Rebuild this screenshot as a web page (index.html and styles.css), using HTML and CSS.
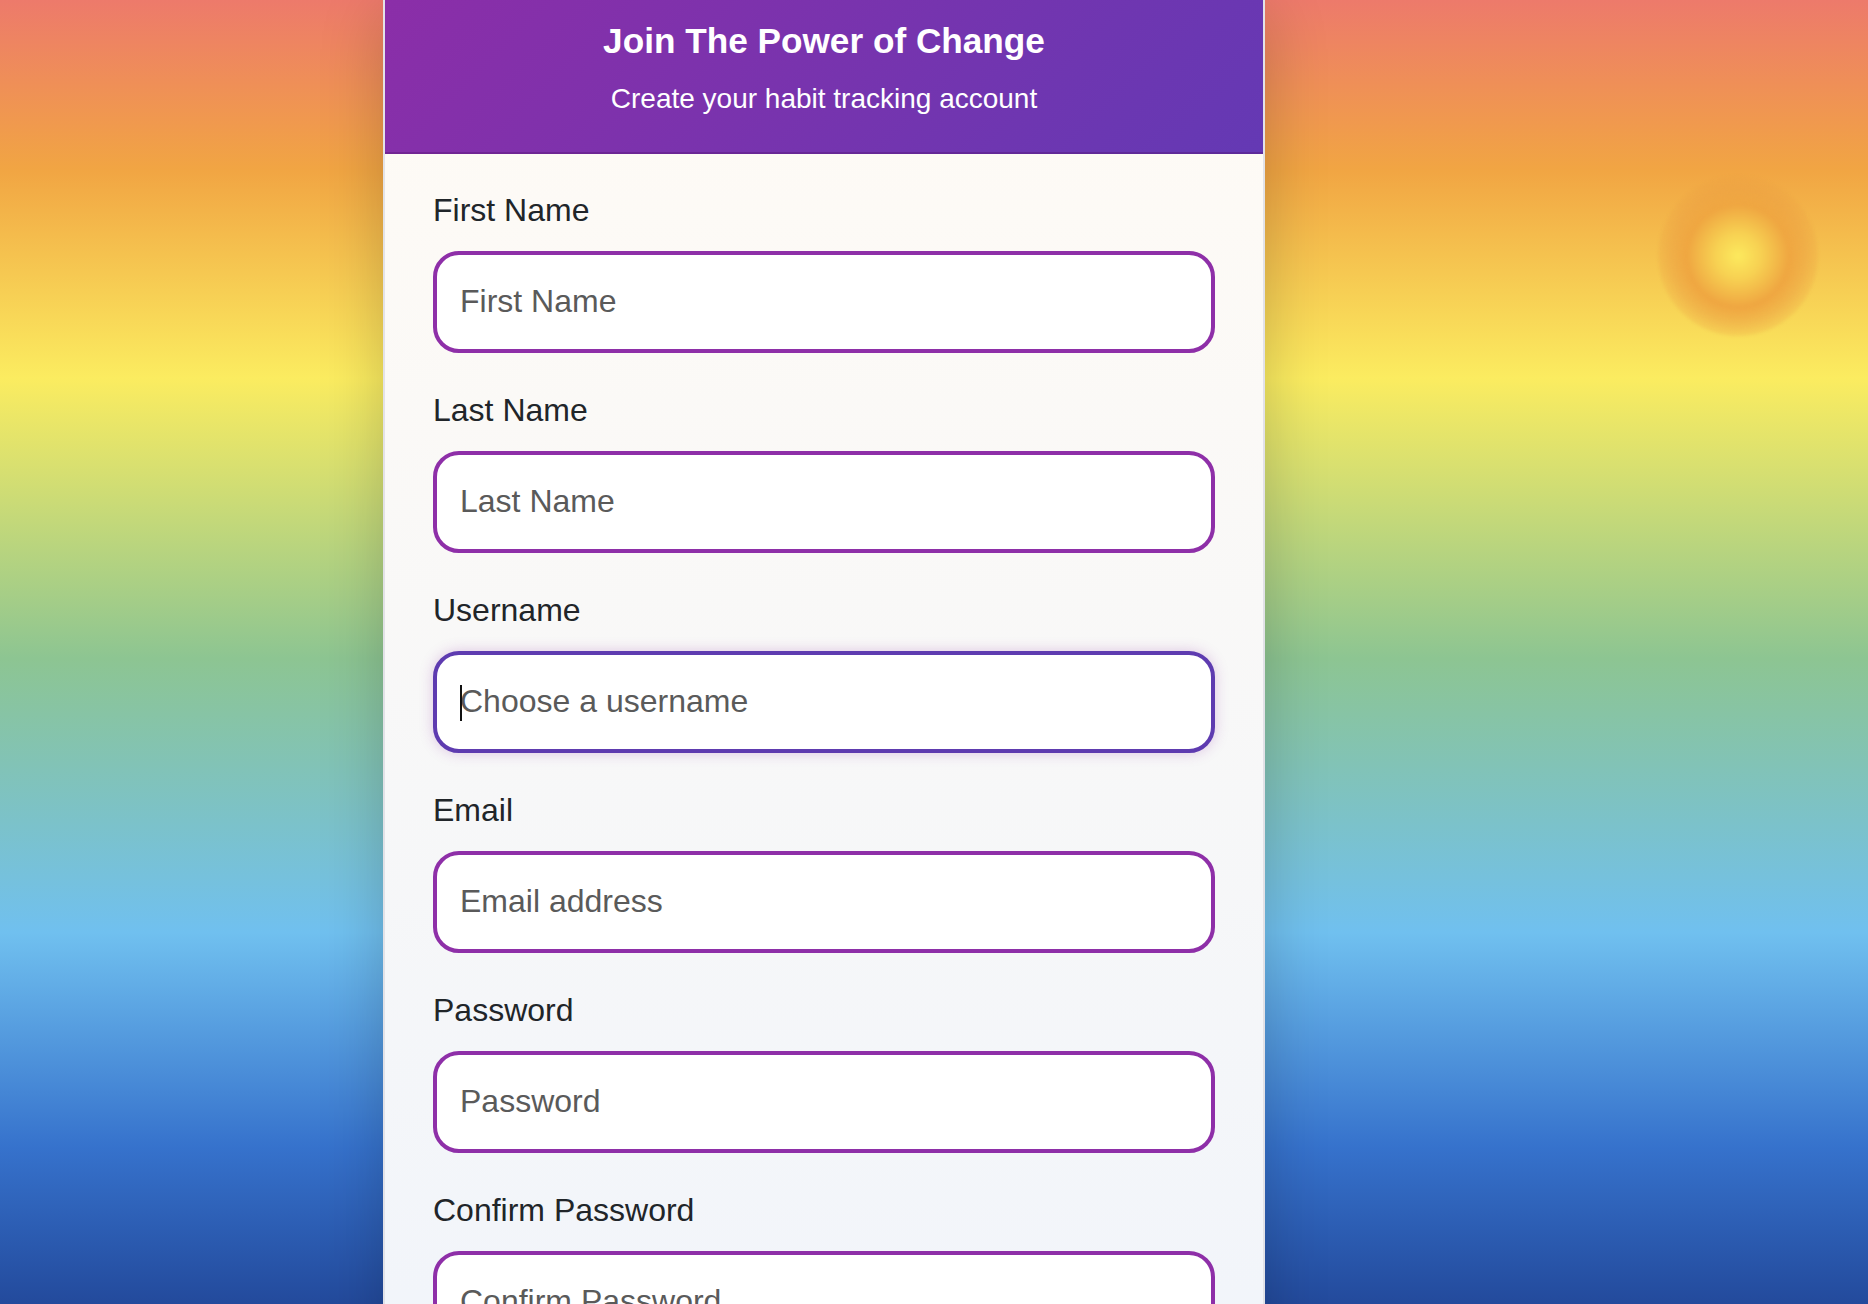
FILE: index.html
```html
<!DOCTYPE html>
<html lang="en">
<head>
<meta charset="utf-8">
<title>Join The Power of Change</title>
<link rel="stylesheet" href="styles.css">
</head>
<body>
<div class="page">
  <div class="sun"></div>
  <main class="card">
    <header class="card-header">
      <h1 class="title">Join The Power of Change</h1>
      <p class="subtitle">Create your habit tracking account</p>
    </header>
    <form class="card-body">
      <div class="field">
        <label class="label" for="first">First Name</label>
        <input class="input" id="first" type="text" placeholder="First Name">
      </div>
      <div class="field">
        <label class="label" for="last">Last Name</label>
        <input class="input" id="last" type="text" placeholder="Last Name">
      </div>
      <div class="field">
        <label class="label" for="username">Username</label>
        <div class="input-wrap">
          <input class="input is-focused" id="username" type="text" placeholder="Choose a username">
          <span class="caret"></span>
        </div>
      </div>
      <div class="field">
        <label class="label" for="email">Email</label>
        <input class="input" id="email" type="email" placeholder="Email address">
      </div>
      <div class="field">
        <label class="label" for="password">Password</label>
        <input class="input" id="password" type="password" placeholder="Password">
      </div>
      <div class="field">
        <label class="label" for="confirm">Confirm Password</label>
        <input class="input" id="confirm" type="password" placeholder="Confirm Password">
      </div>
    </form>
  </main>
</div>
</body>
</html>
```
FILE: styles.css
```css
html, body {
  margin: 0;
  padding: 0;
}

.page {
  position: relative;
  height: 100vh;
  overflow: hidden;
  box-sizing: border-box;
  padding-left: 383px;
  font-family: "Liberation Sans", Arial, Helvetica, sans-serif;
  background: linear-gradient(180deg,
    #ed7a6b 0%,
    #f1a543 13%,
    #fbec60 29%,
    #8dc592 50.5%,
    #70c0ef 71.5%,
    #3672cc 88%,
    #234a9c 100%);
}

.sun {
  position: absolute;
  left: 1658px;
  top: 176px;
  width: 160px;
  height: 160px;
  border-radius: 50%;
  background: radial-gradient(circle closest-side,
    #fce95d 0%,
    #f7d152 28%,
    #efa641 64%,
    rgba(236, 160, 66, 0.55) 84%,
    rgba(236, 160, 66, 0.2) 100%);
  filter: blur(1.5px);
}

.card {
  width: 882px;
  box-sizing: border-box;
  border: 2px solid rgba(222, 222, 228, 0.85);
  border-top: 0;
  background: linear-gradient(180deg, #fffbf5 0%, #f2f5fa 90%);
  box-shadow: 0 10px 60px rgba(0, 0, 0, 0.2);
}

.card-header {
  padding: 20px 0 36px;
  text-align: center;
  color: #ffffff;
  background: linear-gradient(135deg, #8b2ea8 0%, #6439b4 100%);
  border-bottom: 2px solid rgba(70, 20, 110, 0.35);
}

.title {
  margin: 0;
  font-size: 35.2px;
  line-height: 1.2;
  font-weight: 700;
}

.subtitle {
  margin: 20px 0 0;
  font-size: 28px;
  line-height: 1.2;
  font-weight: 400;
}

.card-body {
  padding: 38px 48px 48px;
}

.field {
  margin-bottom: 39px;
}

.label {
  display: block;
  margin-bottom: 22px;
  font-size: 32px;
  line-height: 37px;
  color: #212529;
}

.input-wrap {
  position: relative;
}

.input {
  display: block;
  width: 100%;
  height: 102px;
  box-sizing: border-box;
  padding: 0 23px;
  border: 4px solid #8e2fa8;
  border-radius: 26px;
  background: #ffffff;
  font-family: "Liberation Sans", Arial, Helvetica, sans-serif;
  font-size: 32px;
  color: #333333;
  outline: none;
}

.input::placeholder {
  color: #5a5a5a;
  opacity: 1;
}

.input:focus,
.input.is-focused {
  border-color: #5e3bb0;
  box-shadow: 0 0 14px rgba(142, 47, 168, 0.25);
}

.caret {
  position: absolute;
  left: 27px;
  top: 34px;
  width: 2px;
  height: 36px;
  background: #111111;
}
```
